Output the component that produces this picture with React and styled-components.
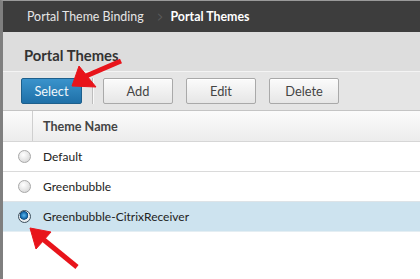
import React, { useState } from 'react';
import styled, { createGlobalStyle } from 'styled-components';

const GlobalStyle = createGlobalStyle`
  body {
    margin: 0;
    background: #fff;
    font-family: Lato, "Open Sans", "Liberation Sans", sans-serif;
  }
`;

const Frame = styled.div`
  position: relative;
  width: 420px;
  height: 279px;
  box-sizing: border-box;
  border-left: 3px solid #7f7f7f;
  border-top: 1px solid #9a9a9a;
  background: #fff;
  overflow: hidden;
`;

const Breadcrumb = styled.div`
  display: flex;
  align-items: center;
  height: 31px;
  padding-left: 24px;
  background: #3d3d3d;
  color: #eaeaea;
  font-size: 12.4px;
`;

const Crumb = styled.span`
  font-weight: ${p => (p.current ? 700 : 400)};
  color: ${p => (p.current ? '#ffffff' : '#e6e6e6')};
`;

const Chevron = styled.span`
  color: #5a5a5a;
  font-size: 17px;
  margin: 0 6px 0 11px;
  transform: scaleX(0.6);
`;

const TitleBar = styled.div`
  display: flex;
  align-items: center;
  height: 40px;
  padding: 6px 0 0 21px;
  box-sizing: border-box;
  background: #dddddd;
  border-bottom: 1px solid #f4f4f4;
`;

const Title = styled.h1`
  margin: 0;
  font-size: 14.8px;
  font-weight: 700;
  color: #333;
`;

const Toolbar = styled.div`
  display: flex;
  align-items: center;
  height: 38px;
  padding-left: 18px;
  background: #e5e5e5;
  border-bottom: 1px solid #c4c4c4;
`;

const Button = styled.button`
  height: 26px;
  width: ${p => p.w}px;
  margin-right: ${p => p.mr || 0}px;
  box-sizing: border-box;
  border-radius: 2px;
  font-family: inherit;
  font-size: 12.8px;
  padding: 0;
  border: 1px solid ${p => (p.primary ? '#1d5f8c' : '#a9a9a9')};
  color: ${p => (p.primary ? '#f2f7fb' : '#444')};
  background: ${p =>
    p.primary
      ? 'linear-gradient(#3a93cc, #1f70a8)'
      : 'linear-gradient(#fbfbfb, #e6e6e6)'};
  box-shadow: ${p => (p.primary ? 'none' : 'inset 0 1px 0 #fff')};
`;

const Separator = styled.div`
  width: 1px;
  height: 26px;
  background: #bdbdbd;
  box-shadow: 1px 0 0 #f8f8f8;
  margin: 0 10px 0 10px;
`;

const Table = styled.div`
  display: flex;
  flex-direction: column;
`;

const HeaderRow = styled.div`
  display: grid;
  grid-template-columns: 29px 1fr;
  height: 30px;
  background: linear-gradient(#fbfbfb, #ececec);
  border-bottom: 1px solid #d6d6d6;
`;

const HeaderCell = styled.div`
  display: flex;
  align-items: center;
  padding-left: 10px;
  font-size: 12.6px;
  font-weight: 700;
  color: #444;
  border-left: ${p => (p.first ? 'none' : '1px solid #cfcfcf')};
`;

const Row = styled.div`
  display: grid;
  grid-template-columns: 29px 1fr;
  height: 29px;
  background: ${p => (p.selected ? '#cde3ef' : '#fff')};
  border-bottom: 1px solid ${p => (p.selected ? '#e4eef3' : '#dadada')};
  border-top: ${p => (p.selected ? '1px solid #dde3e7' : 'none')};
  margin-top: ${p => (p.selected ? '-1px' : '0')};
`;

const RadioCell = styled.div`
  display: flex;
  align-items: center;
  padding-left: 15px;
`;

const Radio = styled.span`
  flex: none;
  width: 13px;
  height: 13px;
  border-radius: 50%;
  box-sizing: border-box;
  border: 1px solid ${p => (p.checked ? '#3d4f5c' : '#a8a8a8')};
  background: ${p =>
    p.checked
      ? 'radial-gradient(circle at 45% 40%, #5ab8f0 0, #1a6fb0 3px, #0d4a7c 4px, #e9edf0 4.6px)'
      : 'radial-gradient(circle at 40% 35%, #ffffff, #d0d0d0)'};
`;

const NameCell = styled.div`
  display: flex;
  align-items: center;
  padding-left: 11px;
  font-size: 12px;
  color: #222;
`;

const Arrows = styled.svg`
  position: absolute;
  left: -3px;
  top: -1px;
  pointer-events: none;
`;

const themes = ['Default', 'Greenbubble', 'Greenbubble-CitrixReceiver'];

export default function App() {
  const [selected, setSelected] = useState(2);

  return (
    <Frame>
      <GlobalStyle />
      <Breadcrumb>
        <Crumb>Portal Theme Binding</Crumb>
        <Chevron>&gt;</Chevron>
        <Crumb current>Portal Themes</Crumb>
      </Breadcrumb>
      <TitleBar>
        <Title>Portal Themes</Title>
      </TitleBar>
      <Toolbar>
        <Button primary w={61}>Select</Button>
        <Separator />
        <Button w={70} mr={13}>Add</Button>
        <Button w={70} mr={13}>Edit</Button>
        <Button w={70}>Delete</Button>
      </Toolbar>
      <Table>
        <HeaderRow>
          <HeaderCell first />
          <HeaderCell>Theme Name</HeaderCell>
        </HeaderRow>
        {themes.map((name, i) => (
          <Row key={name} selected={i === selected} onClick={() => setSelected(i)}>
            <RadioCell>
              <Radio checked={i === selected} />
            </RadioCell>
            <NameCell>{name}</NameCell>
          </Row>
        ))}
      </Table>
      <Arrows width="420" height="279" viewBox="0 0 420 279">
        <g fill="#e8141b" stroke="#e8141b" strokeLinejoin="round">
          <line x1="121" y1="61" x2="86" y2="76" strokeWidth="5" />
          <polygon points="72,86 79,66 96,87" strokeWidth="1" />
          <line x1="77" y1="267" x2="44" y2="240" strokeWidth="5" />
          <polygon points="30,228 51,232 36,249" strokeWidth="1" />
        </g>
      </Arrows>
    </Frame>
  );
}
